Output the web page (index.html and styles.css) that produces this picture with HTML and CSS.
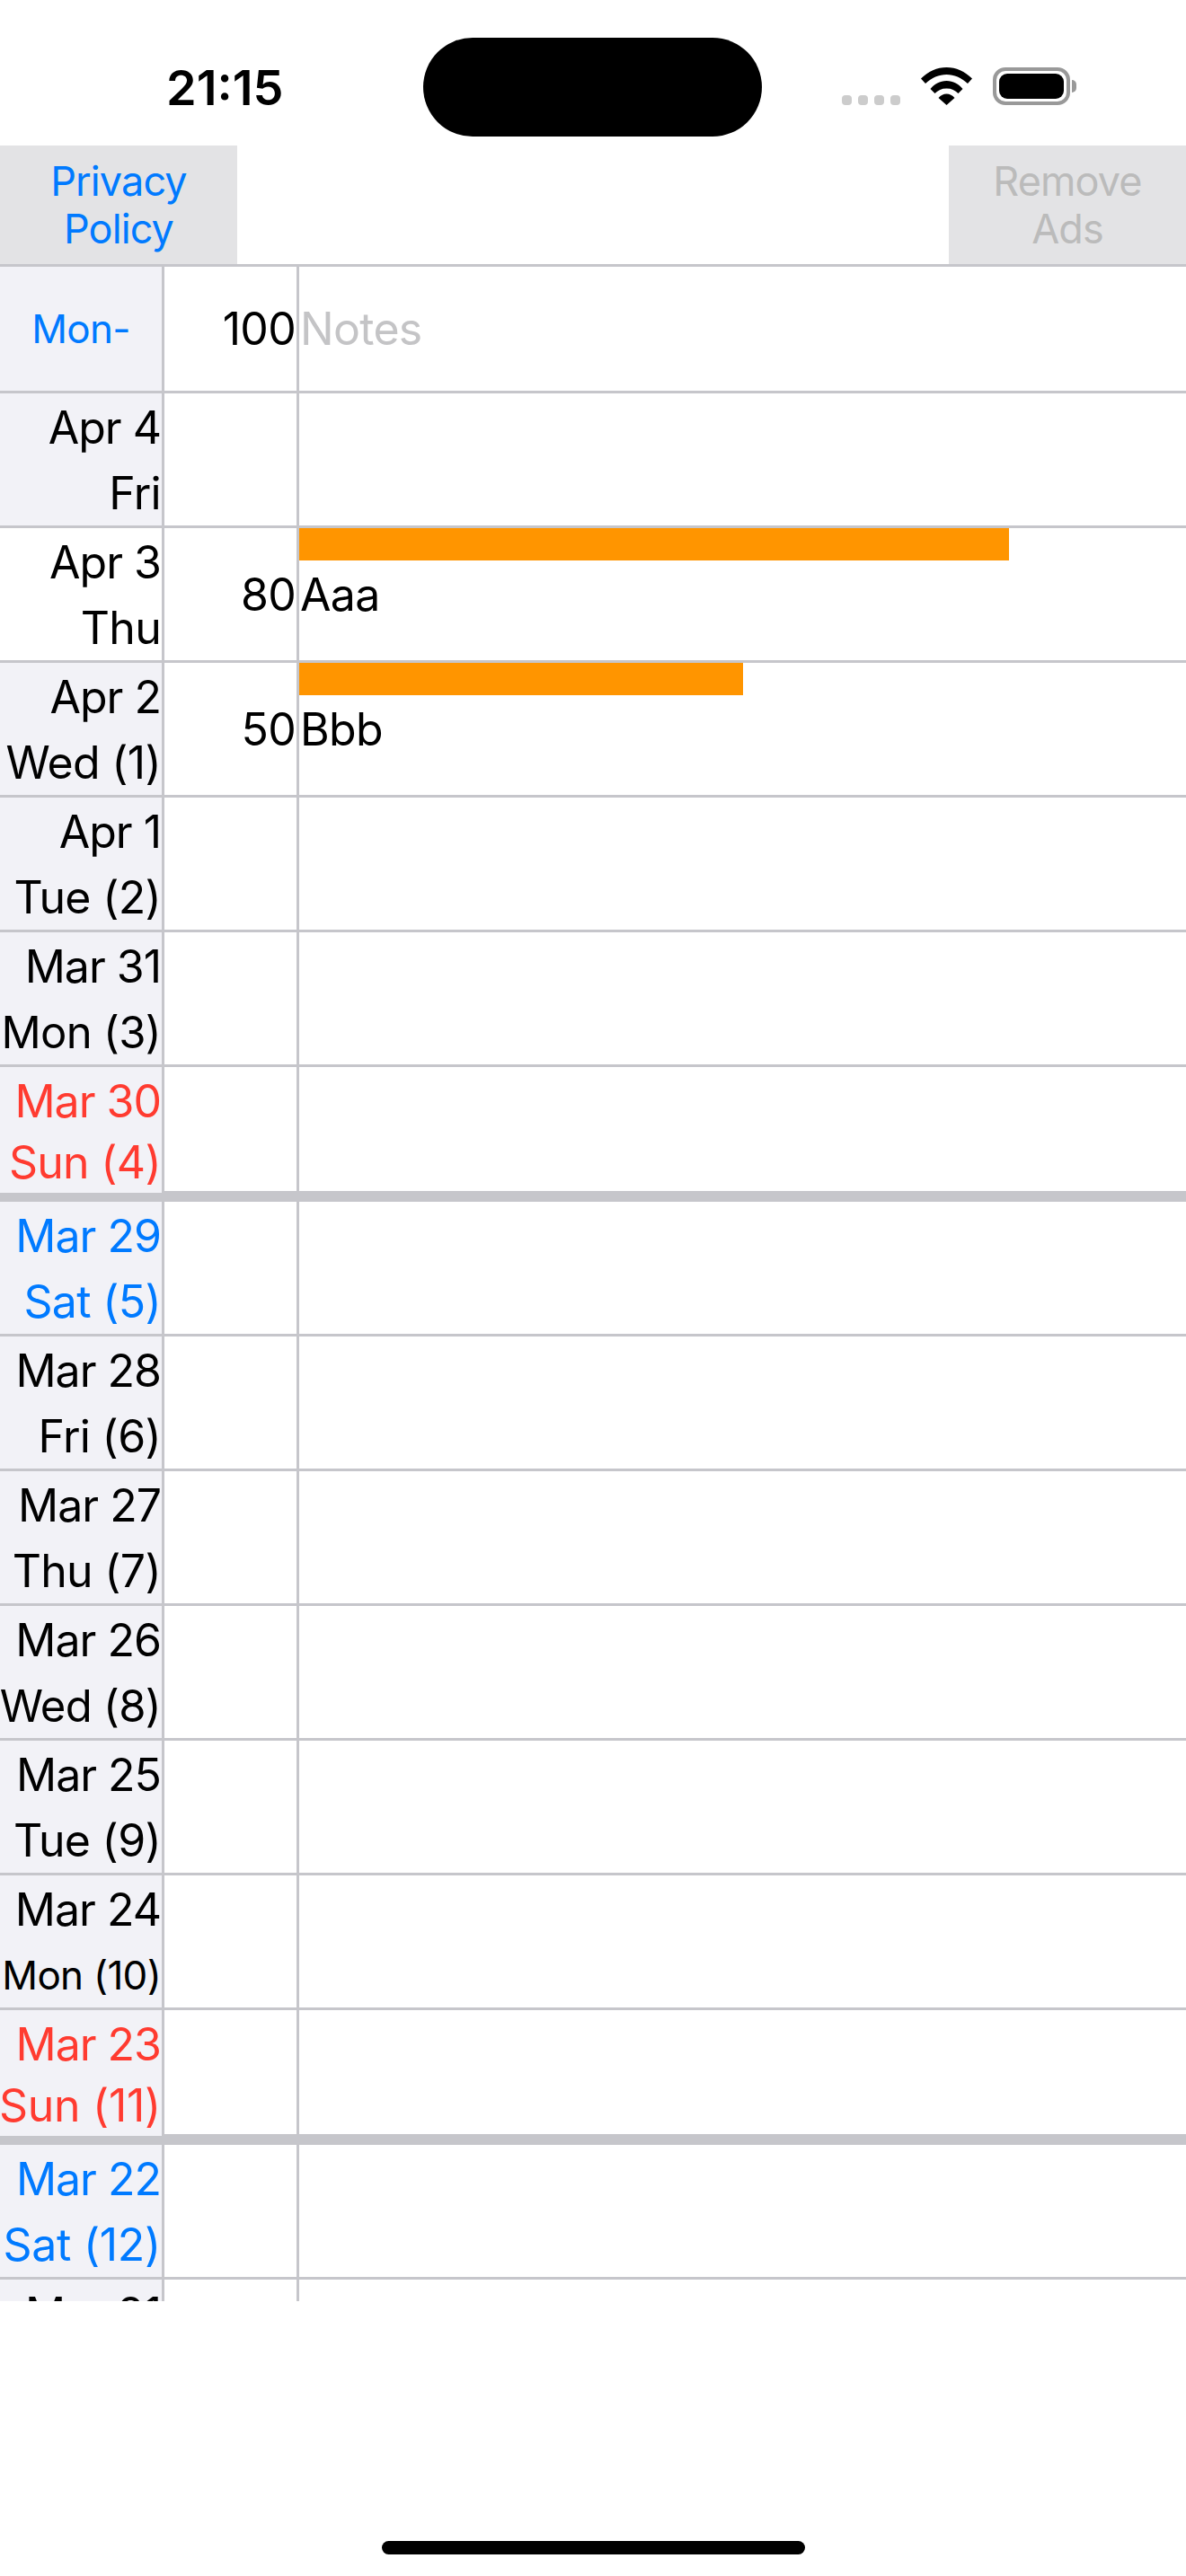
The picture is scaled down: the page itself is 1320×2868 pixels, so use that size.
FILE: index.html
```html
<!DOCTYPE html>
<html lang="en">
<head>
  <meta charset="UTF-8">
  <meta name="viewport" content="width=device-width, initial-scale=1.0">
  <title>Daily Log</title>
  <link rel="stylesheet" href="styles.css">
</head>
<body>
  <div class="status-bar">
    <div class="time">21:15</div>
    <div class="island"></div>
    <div class="signal"><span></span><span></span><span></span><span></span></div>
    <svg class="wifi" viewBox="0 0 57 42" width="57" height="42">
      <path d="M0 12.5C8 4.5 18 0 28.5 0S49 4.5 57 12.5L52 18C45 11.5 37 8 28.5 8S12 11.5 5 18Z"/>
      <path d="M10.5 24C15 18.5 21 15 28.5 15S42 18.5 46.5 24L41.5 29C38 25.5 34 23.5 28.5 23.5S19 25.5 15.5 29Z"/>
      <path d="M19.5 34C22 31 25 29.5 28.5 29.5S35 31 37.5 34L28.5 42Z"/>
    </svg>
    <div class="battery"><div class="battery-fill"></div></div>
    <div class="battery-nub"></div>
  </div>

  <div class="toolbar">
    <button class="tool-btn">Privacy<br>Policy</button>
    <button class="tool-btn disabled">Remove<br>Ads</button>
  </div>

  <div class="table">
    <div class="row head">
      <div class="date single blue">Mon-</div>
      <div class="value">100</div>
      <div class="notes placeholder">Notes</div>
    </div>
    <div class="row">
      <div class="date"><span>Apr 4</span><span>Fri</span></div>
      <div class="value"></div>
      <div class="notes"></div>
    </div>
    <div class="row">
      <div class="date today"><span>Apr 3</span><span>Thu</span></div>
      <div class="value">80</div>
      <div class="notes"><div class="bar" style="width: 80%"></div>Aaa</div>
    </div>
    <div class="row">
      <div class="date"><span>Apr 2</span><span>Wed (1)</span></div>
      <div class="value">50</div>
      <div class="notes"><div class="bar" style="width: 50%"></div>Bbb</div>
    </div>
    <div class="row">
      <div class="date"><span>Apr 1</span><span>Tue (2)</span></div>
      <div class="value"></div>
      <div class="notes"></div>
    </div>
    <div class="row">
      <div class="date"><span>Mar 31</span><span class="fit">Mon (3)</span></div>
      <div class="value"></div>
      <div class="notes"></div>
    </div>
    <div class="row week-end">
      <div class="date red"><span>Mar 30</span><span>Sun (4)</span></div>
      <div class="value"></div>
      <div class="notes"></div>
    </div>
    <div class="row">
      <div class="date blue"><span>Mar 29</span><span>Sat (5)</span></div>
      <div class="value"></div>
      <div class="notes"></div>
    </div>
    <div class="row">
      <div class="date"><span>Mar 28</span><span>Fri (6)</span></div>
      <div class="value"></div>
      <div class="notes"></div>
    </div>
    <div class="row">
      <div class="date"><span>Mar 27</span><span>Thu (7)</span></div>
      <div class="value"></div>
      <div class="notes"></div>
    </div>
    <div class="row">
      <div class="date"><span>Mar 26</span><span class="fit">Wed (8)</span></div>
      <div class="value"></div>
      <div class="notes"></div>
    </div>
    <div class="row">
      <div class="date"><span>Mar 25</span><span>Tue (9)</span></div>
      <div class="value"></div>
      <div class="notes"></div>
    </div>
    <div class="row">
      <div class="date"><span>Mar 24</span><span class="fit-small">Mon (10)</span></div>
      <div class="value"></div>
      <div class="notes"></div>
    </div>
    <div class="row week-end">
      <div class="date red"><span>Mar 23</span><span class="wide">Sun (11)</span></div>
      <div class="value"></div>
      <div class="notes"></div>
    </div>
    <div class="row">
      <div class="date blue"><span>Mar 22</span><span class="wide">Sat (12)</span></div>
      <div class="value"></div>
      <div class="notes"></div>
    </div>
    <div class="row">
      <div class="date"><span>Mar 21</span><span>Fri (13)</span></div>
      <div class="value"></div>
      <div class="notes"></div>
    </div>
  </div>

  <div class="home-bar"></div>
</body>
</html>
```

FILE: styles.css
```css
html, body { margin: 0; padding: 0; background: #fff; }
body { width: 1320px; height: 2868px; overflow: hidden; font-family: Inter, "Liberation Sans", sans-serif; color: #000; }

.status-bar { display: flex; align-items: flex-start; height: 162px; padding-left: 185px; box-sizing: border-box; }
.time { width: 286px; margin-top: 68px; font-size: 54px; line-height: 60px; font-weight: 600; }
.island { width: 377px; height: 110px; margin-top: 42px; background: #000; border-radius: 55px; }
.signal { display: flex; gap: 7px; margin: 106px 23px 0 89px; }
.signal span { width: 11px; height: 11px; background: #ccc; border-radius: 4px; }
.wifi { margin-top: 75px; margin-right: 23px; fill: #000; }
.battery { width: 86px; height: 42px; margin-top: 75px; padding: 3px; box-sizing: border-box; border: 4px solid #999; border-radius: 14px; }
.battery-fill { height: 100%; background: #000; border-radius: 9px; }
.battery-nub { width: 5px; height: 14px; margin: 89px 0 0 2px; background: #999; border-radius: 0 7px 7px 0; }

.toolbar { display: flex; justify-content: space-between; height: 132px; }
.tool-btn { width: 264px; padding: 0; border: none; background: #e3e3e5; color: #007aff; font-family: inherit; font-size: 45px; line-height: 53px; letter-spacing: -0.9px; text-align: center; }
.tool-btn.disabled { color: #bbb; }

.table { height: 2265px; overflow: hidden; border-top: 3px solid #c6c6cb; }
.row { display: grid; grid-template-columns: 183px 150px 1fr; height: 150px; box-sizing: border-box; border-bottom: 3px solid #c6c6cb; font-size: 50px; letter-spacing: -0.7px; }
.row.head { height: 141px; }
.row.week-end { border-bottom-width: 12px; }

.date { display: grid; grid-template-columns: minmax(0, 1fr); grid-template-rows: 1fr 1fr; row-gap: 2px; align-items: center; justify-items: end; padding: 2px 1px 0 0; background: #f2f2f7; border-right: 3px solid #c6c6cb; white-space: nowrap; }
.date span:first-child { letter-spacing: -1px; }
.date.today { background: #fff; }
.date.single { display: flex; justify-content: center; padding: 0; font-size: 44px; }
.date.red { color: #ff3b30; }
.date.blue { color: #007aff; }
.week-end .date { grid-template-rows: 68px 68px; row-gap: 0; padding-top: 4px; }
.fit { font-size: 49px; }
.fit-small { font-size: 44px; }
.wide { letter-spacing: -0.3px; }

.value { display: flex; align-items: center; justify-content: flex-end; padding-right: 1px; border-right: 3px solid #c6c6cb; }
.notes { position: relative; display: flex; align-items: center; padding-left: 1px; }
.notes.placeholder { color: #c4c4c6; }
.bar { position: absolute; top: 0; left: 0; height: 36px; background: #ff9500; }

.home-bar { width: 471px; height: 15px; margin: 267px auto 0; background: #000; border-radius: 8px; }
```
